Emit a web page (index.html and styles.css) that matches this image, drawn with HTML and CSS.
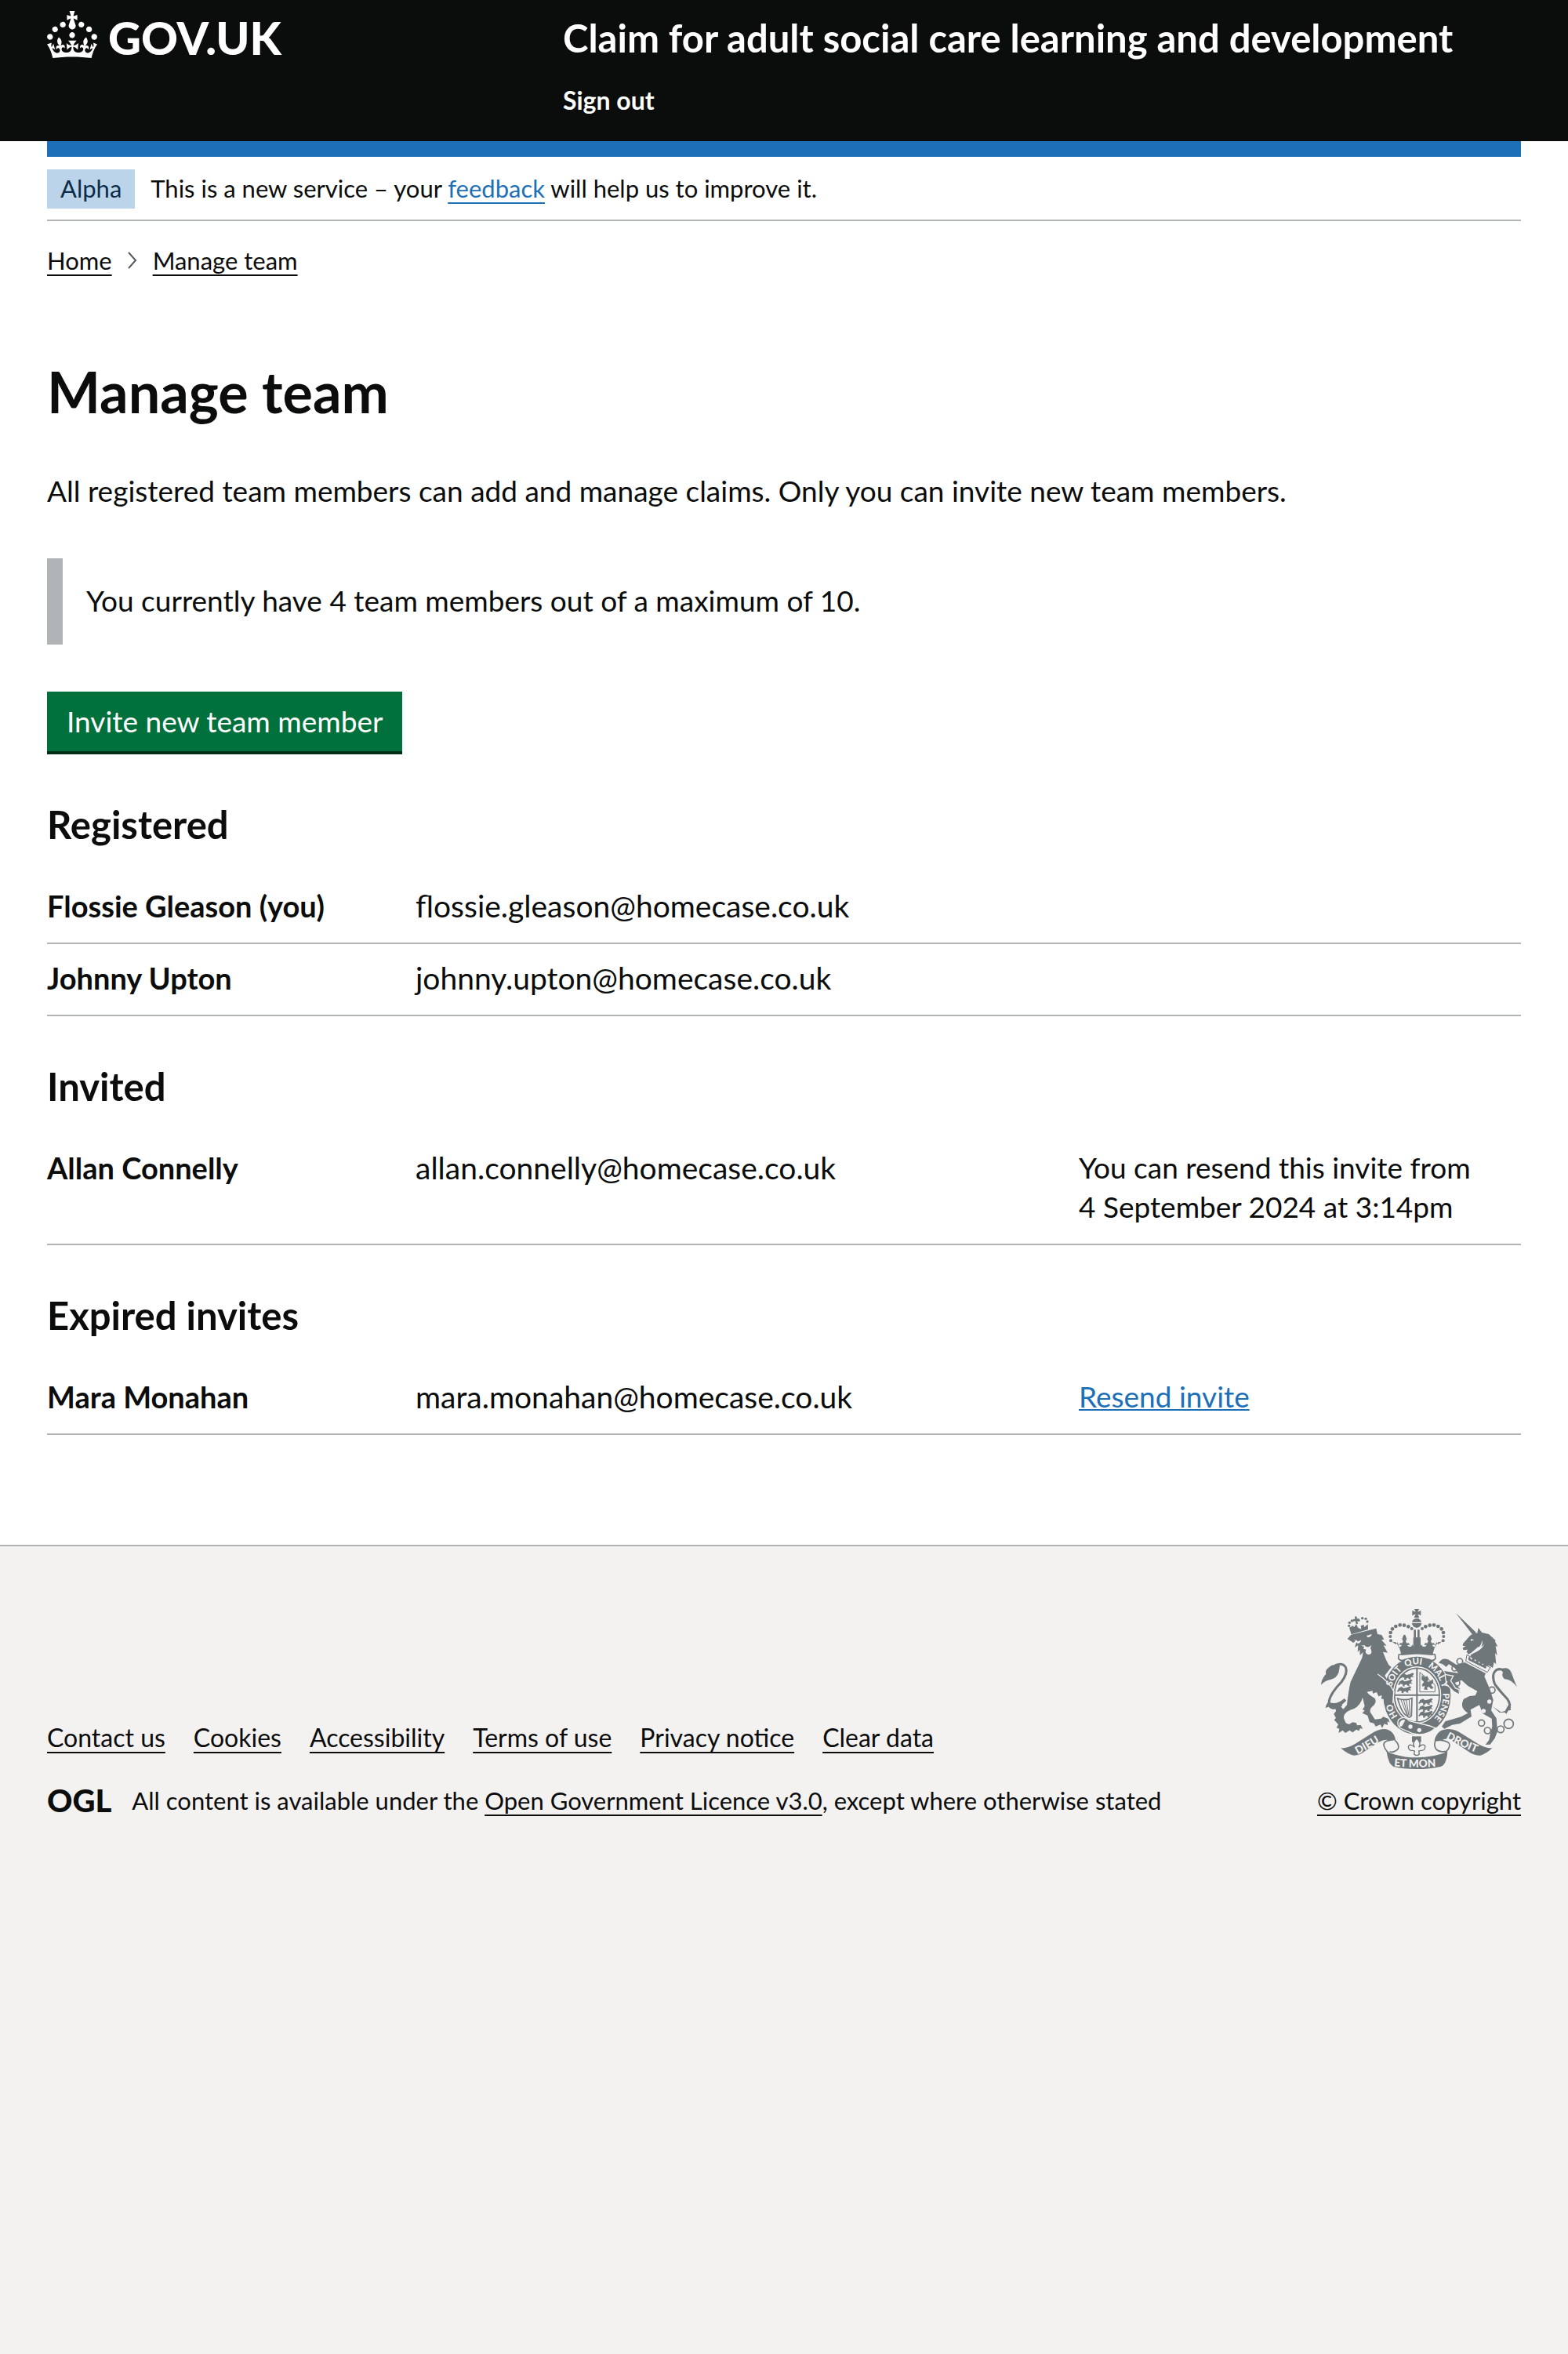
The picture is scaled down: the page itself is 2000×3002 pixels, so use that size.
FILE: index.html
```html
<!DOCTYPE html>
<html lang="en">
<head>
<meta charset="utf-8">
<meta name="viewport" content="width=device-width, initial-scale=1">
<title>Manage team – Claim for adult social care learning and development</title>
<link rel="stylesheet" href="styles.css">
</head>
<body>
<header class="header">
  <div class="header-inner container">
    <a class="logo" href="#">
      <svg class="logo-crown" viewBox="0 0 32 30" aria-hidden="true"><path d="M22.6 10.4c-1 .4-2-.1-2.4-1-.4-.9.1-2 1-2.4.9-.4 2 .1 2.4 1s-.1 2-1 2.4m-5.9 6.7c-.9.4-2-.1-2.4-1-.4-.9.1-2 1-2.4.9-.4 2 .1 2.4 1s-.1 2-1 2.4m10.8-3.7c-1 .4-2-.1-2.4-1-.4-.9.1-2 1-2.4.9-.4 2 .1 2.4 1s0 2-1 2.4m3.3 4.8c-1 .4-2-.1-2.4-1-.4-.9.1-2 1-2.4.9-.4 2 .1 2.4 1s-.1 2-1 2.4M17 4.7l2.3 1.2V2.5l-2.3.7-.2-.2.9-3h-3.4l.9 3-.2.2c-.1.1-2.3-.7-2.3-.7v3.4L15 4.7c.1.1.1.2.2.2l-1.3 4c-.1.2-.1.4-.1.6 0 1.1.8 2 1.9 2.2h.7c1-.2 1.9-1.1 1.9-2.1 0-.2 0-.4-.1-.6l-1.3-4c-.1-.2 0-.2.1-.3m-7.6 5.7c.9.4 2-.1 2.4-1 .4-.9-.1-2-1-2.4-.9-.4-2 .1-2.4 1s0 2 1 2.4m-5 3c.9.4 2-.1 2.4-1 .4-.9-.1-2-1-2.4-.9-.4-2 .1-2.4 1s.1 2 1 2.4m-3.2 4.8c.9.4 2-.1 2.4-1 .4-.9-.1-2-1-2.4-.9-.4-2 .1-2.4 1s0 2 1 2.4m14.8 11c4.4 0 8.6.3 12.3.8 1.1-4.5 2.4-7 3.7-8.8l-2.5-.9c.2 1.3.3 1.9 0 2.7-.4-.4-.8-1.1-1.1-2.3l-1.2 4c.7-.5 1.3-.8 2-.9-1.1 2.5-2.6 3.1-3.5 3-1.1-.2-1.7-1.2-1.5-2.1.3-1.2 1.5-1.5 2.1-.1 1.1-2.3-.8-3-2-2.3 1.9-1.9 2.1-3.5.6-5.6-2.1 1.6-2.1 3.2-1.2 5.5-1.2-1.4-3.2-.6-2.5 1.6.9-1.4 2.1-.5 1.9.8-.2 1.1-1.7 2.1-3.5 1.9-2.7-.2-2.9-2.1-2.9-3.6.7-.1 1.9.5 2.9 1.9l.4-4.3c-1.1 1.1-2.1 1.4-3.2 1.4.4-1.2 2.1-3 2.1-3h-5.4s1.7 1.9 2.1 3c-1.1 0-2.1-.2-3.2-1.4l.4 4.3c1-1.4 2.2-2 2.9-1.9-.1 1.5-.2 3.4-2.9 3.6-1.9.2-3.4-.8-3.5-1.9-.2-1.3 1-2.2 1.9-.8.7-2.3-1.2-3-2.5-1.6.9-2.2.9-3.9-1.2-5.5-1.5 2-1.3 3.7.6 5.6-1.2-.7-3.1 0-2 2.3.6-1.4 1.8-1.1 2.1.1.2.9-.3 1.9-1.5 2.1-.9.2-2.4-.5-3.5-3 .6 0 1.2.3 2 .9l-1.2-4c-.3 1.1-.7 1.9-1.1 2.3-.3-.8-.2-1.4 0-2.7l-2.9.9C1.3 23 2.6 25.5 3.7 30c3.7-.5 7.9-.8 12.3-.8"/></svg>
      <span>GOV.UK</span>
    </a>
    <div class="header-content">
      <a class="service-name" href="#">Claim for adult social care learning and development</a>
      <nav aria-label="Account"><a class="sign-out" href="#">Sign out</a></nav>
    </div>
  </div>
</header>

<div class="container">
  <div class="phase-banner">
    <strong class="tag">Alpha</strong>
    <span>This is a new service – your <a class="link" href="#">feedback</a> will help us to improve it.</span>
  </div>
  <nav class="breadcrumbs" aria-label="Breadcrumb">
    <a href="#">Home</a>
    <svg class="chevron" viewBox="0 0 12 22" aria-hidden="true"><path d="M1 1l9 10-9 10"/></svg>
    <a href="#">Manage team</a>
  </nav>

  <main class="main">
    <h1>Manage team</h1>
    <p class="intro">All registered team members can add and manage claims. Only you can invite new team members.</p>
    <div class="inset">You currently have 4 team members out of a maximum of 10.</div>
    <button class="button" type="button">Invite new team member</button>

    <h2 id="registered">Registered</h2>
    <table class="people" aria-labelledby="registered">
      <tr><th scope="row">Flossie Gleason (you)</th><td class="email">flossie.gleason@homecase.co.uk</td><td></td></tr>
      <tr><th scope="row">Johnny Upton</th><td class="email">johnny.upton@homecase.co.uk</td><td></td></tr>
    </table>

    <h2 id="invited">Invited</h2>
    <table class="people" aria-labelledby="invited">
      <tr><th scope="row">Allan Connelly</th><td class="email">allan.connelly@homecase.co.uk</td><td>You can resend this invite from<br>4 September 2024 at 3:14pm</td></tr>
    </table>

    <h2 id="expired">Expired invites</h2>
    <table class="people" aria-labelledby="expired">
      <tr><th scope="row">Mara Monahan</th><td class="email">mara.monahan@homecase.co.uk</td><td><a class="resend" href="#">Resend invite</a></td></tr>
    </table>
  </main>
</div>

<footer class="footer">
  <div class="footer-inner container">
    <div>
      <ul class="footer-links">
        <li><a href="#">Contact us</a></li>
        <li><a href="#">Cookies</a></li>
        <li><a href="#">Accessibility</a></li>
        <li><a href="#">Terms of use</a></li>
        <li><a href="#">Privacy notice</a></li>
        <li><a href="#">Clear data</a></li>
      </ul>
      <div class="licence">
        <span class="ogl">OGL</span>
        <span>All content is available under the <a href="#">Open Government Licence v3.0</a>, except where otherwise stated</span>
      </div>
    </div>
    <a class="copyright" href="#">
      <svg class="arms" viewBox="132 96 750 612" aria-hidden="true">
        <defs>
          <path id="garter" d="M499 544A99 118 0 0 1 499 307A99 118 0 0 1 499 544"/>
          <path id="scroll-left" d="M272 652Q321 627 382 587"/>
          <path id="scroll-right" d="M609 591Q672 625 752 656"/>
          <path id="scroll-mid" d="M411 697Q499 706 600 696"/>
          <g id="lions">
            <path d="M0 8l12-6 8 6 14-3 10-5 6 4-6 6 6 8-8-3-6 5 3 5-8-1-4-5-8 3 1 5-8-1 1-7-8-2-7 5-4-4 5-4z"/>
          </g>
          <g id="half-crown">
            <circle cx="399" cy="217" r="6"/><circle cx="397" cy="201" r="6"/><circle cx="398" cy="186" r="7"/><circle cx="405" cy="172" r="7"/><circle cx="418" cy="162" r="7"/><circle cx="434" cy="157" r="7"/><circle cx="450" cy="158" r="7"/><circle cx="466" cy="163" r="7"/><circle cx="479" cy="171" r="6"/>
            <path d="M404 221l14 10 6-8 6 12-4 6q12 2 15-7-6-3-9 1-2-12 10-8l4-8-4-8 6-16 6-1 6 17-4 8 4 8q12-4 10 8-4-4-8 0 4 8 15 4l6-8 4 14 8-4-6-16 8-8-10-12h26v62l-74 6q-4-30-21-50z"/>
          </g>
        </defs>

        <g class="ink">
          <!-- lion -->
          <path d="M233 210l14-16 96-24 5 22 16 3 9 17-10 2 20 22-12-1 16 28-18-3 12 30 10 20 10 8-25 32 12 22q18 18 28 35l-3 47-14-6 2 14-14-10-8 8-3-18-14-3 3-13-13 4-7-16-15 5-1-10-22 4 10 11 21 14q8 12-4 26-17 12-14 26l18 28 24-3 8-7 20 8 5 14-9-4 1 14-13-5-8 16-7-13-18 7-7-12-16-4-8-26-20-9 9-10-8-3 8-14-8-33q-7 30-34 44-40 12-38 36l8 18 12 5 14-8 14 3 3 9 14-1 8 14-10-2-5 10-10-5-14 11-12-8-16 10-10-10-16 10 3-16-11-4 7-12-16-18 7-7-8-16 8-10-2-16 20-4 10 12 14-16q6-55 14-88l44-92 4-22-12 12-1-22-8 10 2-26-13 8 9-30-14 12z"/>
          <path class="line-9" d="M212 462Q162 486 163 448Q167 420 210 375Q236 340 226 318Q214 300 186 311"/>
          <path d="M204 312q-28-9-45 10-12 8-8 22-18 20-19 42 14-16 38-21 22-4 30-28zM158 452q-8 12-9 22l12-4q12 14 34 7l34-31-8-8q-28 24-54 16z"/>
          <!-- lion's crown -->
          <path d="M240 167l8 26 64-19-1-20-14 12-1-10-12 4 2 13-13-6-6-14-8 12-5-5z"/>
          <circle cx="239" cy="160" r="5"/><circle cx="241" cy="148" r="5"/><circle cx="250" cy="141" r="5"/><circle cx="276" cy="139" r="5"/><circle cx="290" cy="131" r="5"/><circle cx="303" cy="133" r="5"/><circle cx="309" cy="144" r="5"/>
          <path d="M261 124l8 1 1 8 8-1 1 8-8 1 2 12h-7l-3-11-8 1-1-8 8-1z"/>
          <!-- unicorn -->
          <path d="M647 110l78 75-12 11zM730 188l4-20 14 18 26 6 26 24-2 4 10 20-8-3 6 36-8-8 4 42-8-8-5 22-16-10-4 8-66-32 2-16 22-12q26-12 32-34-6 18-26 16l-28 24-10 4-6-10 4-8-16 2-3-8 12-8-12-1 1-7 26-30 18-13z"/>
          <path d="M682 300l80 42-5 12 22 50 12 40-8 40 20 30 4 50-10 26-18 24-18 1 14-18 4-22 8-30-2-30-35-20-12-32-34 18 4 26-44 27-30 5-30 15-10-9 14-20 22-6 38-11 26-14q-34-22-16-54l22-11 22-2 8-17-36-20-24-22-26 10 9 12 9 10 2 16-11-8-8 2-2-10-17-7-3-10-12-16-1-22-7-12 54 8-14-20-22-14-10 10-15-11-14-4q14-22 36-13l32 20z"/>
          <path class="line-9" d="M797 384Q782 345 803 329Q824 318 848 345M797 384Q818 412 845 440Q862 466 848 480"/>
          <path d="M820 326q28-12 40 12 12 34 22 56-26-32-48-30-13-12-6-26zM788 468l32 22 16-4 12-22 11-4-3 15 3 7-10 2-8 13-6-6-20 1z"/>
          <g class="line-5">
            <circle cx="663" cy="296" r="11"/><circle cx="643" cy="323" r="10"/><circle cx="651" cy="379" r="12"/><circle cx="786" cy="406" r="12"/><circle cx="746" cy="532" r="12"/><circle cx="769" cy="561" r="12"/><circle cx="819" cy="556" r="13"/><circle cx="850" cy="535" r="18"/>
          </g>
          <!-- royal crown -->
          <use href="#half-crown"/><use href="#half-crown" transform="matrix(-1 0 0 1 998 0)"/>
          <path d="M489 96h18l-5 11 12-6v20l-12-6 6 14h-20l6-14-13 6v-20l13 6zM480 146q3-14 19-15 14 1 17 15zM479 150h38q-3 16-19 18-15-2-19-18zM487 175h8v30h-8zM501 175h8v30h-8z"/>
          <path class="line-5" d="M430 270Q499 258 568 270L570 285Q562 297 548 290Q499 277 450 290Q436 297 428 285z"/>
          <!-- garter -->
          <ellipse cx="499" cy="427" rx="129" ry="149"/>
        </g>
        <g class="paper">
          <ellipse cx="499" cy="425" rx="93" ry="110"/>
          <path d="M258 211q14 14 28 3-4 16-14 13-8-4-14-16zM306 198l20-6q-2 12-16 12zM300 238q14 8 25-4l-4 12q8 14 1 22-8 5-16-1-7-8-1-16l-11-3 3-8-12-4 14-2z"/>
          <path d="M749 215q4 38-38 50l-22 10 20-12q34-16 40-48zM706 210l12 4-14 4z"/>
          <circle cx="776" cy="450" r="8"/><circle cx="754" cy="486" r="8"/>
        </g>
        <path class="collar" d="M690 271L780 320L768 338L686 295z"/>
        <path class="ink" d="M695 286l4-10 8 14 9-10 5 16 10-8 5 16 11-8 2 14 12-4 4 10-3 8-65-32z"/>
        <ellipse class="ink line-5" cx="499" cy="425" rx="86" ry="103"/>
        <g class="ink">
          <path d="M496 321h6v206h-6zM412 422h174v6H412z"/>
          <use href="#lions" x="438" y="340"/><use href="#lions" x="432" y="365"/><use href="#lions" x="428" y="391"/>
          <use href="#lions" x="510" y="437"/><use href="#lions" x="510" y="462"/><use href="#lions" x="510" y="485"/>
          <path class="line-3" d="M510 338l58 48v27h-58z"/>
          <path d="M518 348l12 9 8-5 6 10-5 12 12-2 8-8 3 12-9 10 10 12-10 4-8-9-8 4 3 8-14-1 3-15-8 4-3-8 8-10-10-10z"/>
          <path class="line-5" d="M425 438Q455 448 480 437L478 504Q470 516 460 503Q442 498 425 438z"/>
          <path class="line-3" d="M438 444l22 56M448 444l16 60M458 444l10 60M469 442l3 62"/>
        </g>
        <!-- buckle -->
        <path class="buckle" d="M428 520Q450 500 470 524L548 543L570 551Q530 586 480 571L436 552Q420 540 428 520z"/>
        <g class="paper"><circle cx="474" cy="546" r="8"/><circle cx="508" cy="559" r="8"/><path d="M432 530q12-16 22-8l-12 22-10 2z"/></g>
        <!-- paws over the garter -->
        <path class="ink" d="M345 350Q388 380 408 412L404 454L384 444L360 400z"/>
        <path class="cut-line" d="M349 345Q392 374 411 412L407 456"/>
        <path class="ink cut" d="M606 346L638 352L628 370L646 398L660 404L662 424L640 412L612 384z"/>
        <!-- motto scroll -->
        <g class="ink">
          <path d="M207 628Q232 630 262 612L325 572Q350 555 376 555Q412 560 417 598L396 600Q380 590 352 605L300 640Q280 656 258 656Q238 654 207 628zM787 628Q762 628 737 614L672 574Q645 555 620 555Q590 556 580 570Q566 588 566 602L592 600Q608 585 634 600L694 640Q718 658 742 656Q764 650 787 628zM383 642Q440 664 499 664Q560 664 616 642Q612 690 592 698Q550 708 499 708Q436 708 408 698Q390 690 383 642z"/>
          <path class="line-5" d="M396 598Q372 600 372 616Q376 634 390 645M415 598Q434 616 426 632Q412 646 394 642M592 598Q624 602 624 616Q622 634 606 645M570 600Q562 616 572 632Q586 646 608 640"/>
          <path d="M480 583h35v22h-35z"/>
        </g>
        <path class="lily" d="M498 591q20 18 8 34 14-16 24-6 2 20-16 18l-8 2 2 12q-10 10-20 0l2-12-8-2q-16 2-16-16 8-12 24 4-12-16 8-34z"/>
        <g class="motto">
          <text><textPath href="#garter" startOffset="85">HO</textPath></text>
          <text><textPath href="#garter" startOffset="204">SOIT</textPath></text>
          <text><textPath href="#garter" startOffset="298">QUI</textPath></text>
          <text><textPath href="#garter" startOffset="385">MAL Y</textPath></text>
          <text><textPath href="#garter" startOffset="506">PENSE</textPath></text>
        </g>
        <g class="motto motto-large">
          <text><textPath href="#scroll-left">DIEU</textPath></text>
          <text><textPath href="#scroll-mid">ET MON</textPath></text>
          <text><textPath href="#scroll-right">DROIT</textPath></text>
        </g>
      </svg>
      <span>© Crown copyright</span>
    </a>
  </div>
</footer>
</body>
</html>
```

FILE: styles.css
```css
* { box-sizing: border-box; }

html { background: #f3f2f1; }

body {
  margin: 0;
  background: #fff;
  color: #0b0c0c;
  font-family: Lato, "Liberation Sans", sans-serif;
  font-size: 31px;
  line-height: 40px;
}

a {
  color: inherit;
  text-decoration-thickness: 2px;
  text-decoration-skip-ink: none;
  text-underline-offset: 6px;
}

.container { margin: 0 60px; }

/* Header */
.header { background: #0b0c0c; color: #fff; }
.header a { text-decoration: none; font-weight: 700; }
.header-inner { display: grid; grid-template-columns: 35% 1fr; }
.header .logo {
  display: flex;
  gap: 14px;
  padding-top: 14px;
  font-size: 58px;
  font-weight: 900;
  line-height: 68px;
}
.logo-crown { width: 64px; height: 60px; fill: #fff; }
.header-content {
  display: flex;
  flex-direction: column;
  gap: 30px;
  padding: 18px 0 32px;
  font-size: 32px;
}
.service-name { font-size: 49px; line-height: 60px; }

/* Phase banner and breadcrumbs */
.phase-banner {
  display: flex;
  align-items: baseline;
  gap: 20px;
  padding: 16px 0 14px;
  border-top: 20px solid #1d70b8;
  border-bottom: 2px solid #b1b4b6;
}
.tag {
  padding: 4px 17px 6px;
  background: #bbd4ea;
  color: #0c2d4a;
  font-weight: 400;
}
.link, .resend { color: #1d70b8; }
.breadcrumbs { display: flex; align-items: center; gap: 20px; margin-top: 30px; }
.chevron { width: 12px; height: 22px; fill: none; stroke: #505a5f; stroke-width: 2; }

/* Main content */
.main { padding: 107px 0 140px; font-size: 37px; line-height: 50px; }
h1 { margin: 0 0 62px; font-size: 72px; line-height: 80px; }
h2 { margin: 59px 0 31px; font-size: 49px; line-height: 60px; }
.intro { margin: 0 0 61px; }
.inset { margin-bottom: 60px; padding: 29px 30px 31px; border-left: 20px solid #b1b4b6; }
.button {
  display: block;
  margin-bottom: 63px;
  padding: 13px 25px;
  border: 0;
  background: #00703c;
  box-shadow: 0 4px 0 #002d18;
  color: #fff;
  font: inherit;
}

.people { width: 100%; border-collapse: collapse; table-layout: fixed; }
.people th, .people td {
  padding: 18px 0 22px;
  border-bottom: 2px solid #b1b4b6;
  text-align: left;
  vertical-align: top;
}
.people th { width: 25%; font-size: 38px; }
.people .email { width: 45%; font-size: 39px; }
.resend { text-underline-offset: 2px; }

/* Footer */
.footer { border-top: 2px solid #b1b4b6; background: #f3f2f1; }
.footer-inner {
  display: flex;
  justify-content: space-between;
  align-items: flex-end;
  padding: 80px 0;
}
.footer-links {
  display: flex;
  gap: 36px;
  margin: 0 0 40px;
  padding: 0;
  font-size: 32px;
  list-style: none;
}
.licence { display: flex; gap: 26px; }
.ogl { font-size: 40px; font-weight: 900; }
.copyright { display: flex; flex-direction: column; align-items: center; gap: 20px; }

/* Coat of arms */
.arms { width: 250px; height: 204px; }
.ink { fill: #6f777b; }
.paper { fill: #f3f2f1; }
.line-3, .line-5, .line-9 { fill: none; stroke: #6f777b; stroke-width: 3; }
.line-5 { stroke-width: 5; }
.line-9 { stroke-width: 9; }
.collar { fill: #f3f2f1; stroke: #6f777b; stroke-width: 3; }
.buckle, .cut { fill: #6f777b; stroke: #f3f2f1; stroke-width: 4; }
.cut-line { fill: none; stroke: #f3f2f1; stroke-width: 4; }
.lily { fill: #f3f2f1; stroke: #6f777b; stroke-width: 4; }
.motto { fill: #f3f2f1; font-size: 34px; font-weight: 900; }
.motto-large { font-size: 41px; }
```
